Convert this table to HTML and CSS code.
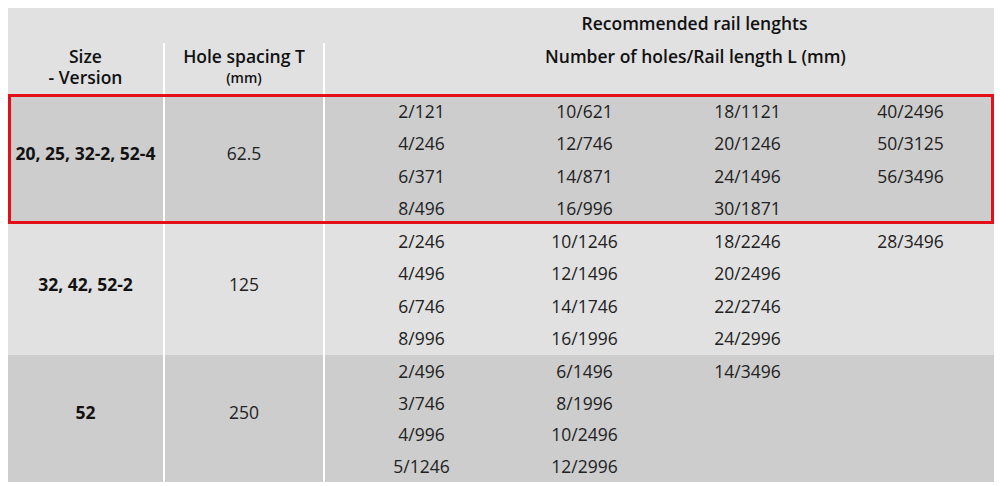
FILE: index.html
```html
<!DOCTYPE html>
<html>
<head>
<meta charset="utf-8">
<link rel="stylesheet" href="styles.css">
</head>
<body>
<div class="tbl">
  <div class="row hrow1">
    <div class="hcell1"></div>
    <div class="hcell1"></div>
    <div class="hcell1 top"><span class="rec">Recommended rail lenghts</span></div>
  </div>
  <div class="row hrow2">
    <div class="cell hcell"><div><span class="ln">Size</span><span class="ln">- Version</span></div></div>
    <div class="cell hcell"><div><span class="ln">Hole spacing T</span><span class="ln unit">(mm)</span></div></div>
    <div class="cell hcell top"><div class="rec">Number of holes/Rail length L (mm)</div></div>
  </div>
  <div class="row grp dark g1">
    <div class="cell size">20, 25, 32-2, 52-4</div>
    <div class="cell spacing">62.5</div>
    <div class="cell data">
      <span>2/121</span><span>10/621</span><span>18/1121</span><span>40/2496</span>
      <span>4/246</span><span>12/746</span><span>20/1246</span><span>50/3125</span>
      <span>6/371</span><span>14/871</span><span>24/1496</span><span>56/3496</span>
      <span>8/496</span><span>16/996</span><span>30/1871</span><span></span>
    </div>
  </div>
  <div class="row grp light g2">
    <div class="cell size">32, 42, 52-2</div>
    <div class="cell spacing">125</div>
    <div class="cell data">
      <span>2/246</span><span>10/1246</span><span>18/2246</span><span>28/3496</span>
      <span>4/496</span><span>12/1496</span><span>20/2496</span><span></span>
      <span>6/746</span><span>14/1746</span><span>22/2746</span><span></span>
      <span>8/996</span><span>16/1996</span><span>24/2996</span><span></span>
    </div>
  </div>
  <div class="row grp dark g3">
    <div class="cell size">52</div>
    <div class="cell spacing">250</div>
    <div class="cell data">
      <span>2/496</span><span>6/1496</span><span>14/3496</span><span></span>
      <span>3/746</span><span>8/1996</span><span></span><span></span>
      <span>4/996</span><span>10/2496</span><span></span><span></span>
      <span>5/1246</span><span>12/2996</span><span></span><span></span>
    </div>
  </div>
</div>
</body>
</html>
```

FILE: styles.css
```css
html, body {
  margin: 0;
  background: #ffffff;
}
body {
  padding: 8px;
  font-family: "Open Sans", "Noto Sans", sans-serif;
  color: #1c1c1c;
}
.tbl {
  width: 986px;
  background: #ffffff;
}
.row {
  display: grid;
  grid-template-columns: 155px 158px 1fr;
  column-gap: 2px;
}
.hrow1 {
  height: 35px;
  column-gap: 0;
  grid-template-columns: 157px 160px 1fr;
}
.hcell1 {
  background: #e1e1e1;
  display: flex;
  align-items: center;
  justify-content: center;
  padding-bottom: 5px;
}
.rec {
  font-weight: 600;
  font-size: 17.5px;
  color: #111;
}
.hcell1.top {
  padding-left: 70px;
}
.hcell.top {
  padding-left: 72px;
}
.cell {
  display: flex;
  align-items: center;
  justify-content: center;
  text-align: center;
}
.hrow2 {
  height: 51px;
}
.hcell {
  background: #e1e1e1;
  font-weight: 600;
  font-size: 17.5px;
  line-height: 21px;
  color: #111;
  align-items: flex-start;
  padding-top: 3px;
}
.ln {
  display: block;
  height: 21px;
  line-height: 21px;
}
.unit {
  font-size: 14px;
  line-height: 22px;
}
.grp .cell {
  font-size: 17.5px;
}
.dark .cell { background: #cdcdcd; }
.light .cell { background: #e1e1e1; }
.g1 {
  height: 130px;
  outline: 3px solid #e3101a;
  outline-offset: -3px;
  position: relative;
}
.g2 { height: 131px; }
.g3 { height: 123px; }
.size,
.spacing {
  padding-bottom: 13px;
}
.g2 .size,
.g2 .spacing {
  padding-bottom: 11px;
}
.size {
  font-weight: 700;
  color: #111;
}
.spacing {
  color: #222;
}
.data {
  display: grid;
  grid-template-columns: repeat(4, 163px);
  padding-left: 15px;
  justify-content: start;
  align-content: start;
  align-items: center;
  color: #222;
}
.g1 .data { padding-top: 1px; grid-auto-rows: 32.3px; }
.g2 .data { padding-top: 1px; grid-auto-rows: 32.3px; }
.g3 .data { padding-top: 0; grid-auto-rows: 31.7px; }
.data span {
  text-align: center;
}
```
